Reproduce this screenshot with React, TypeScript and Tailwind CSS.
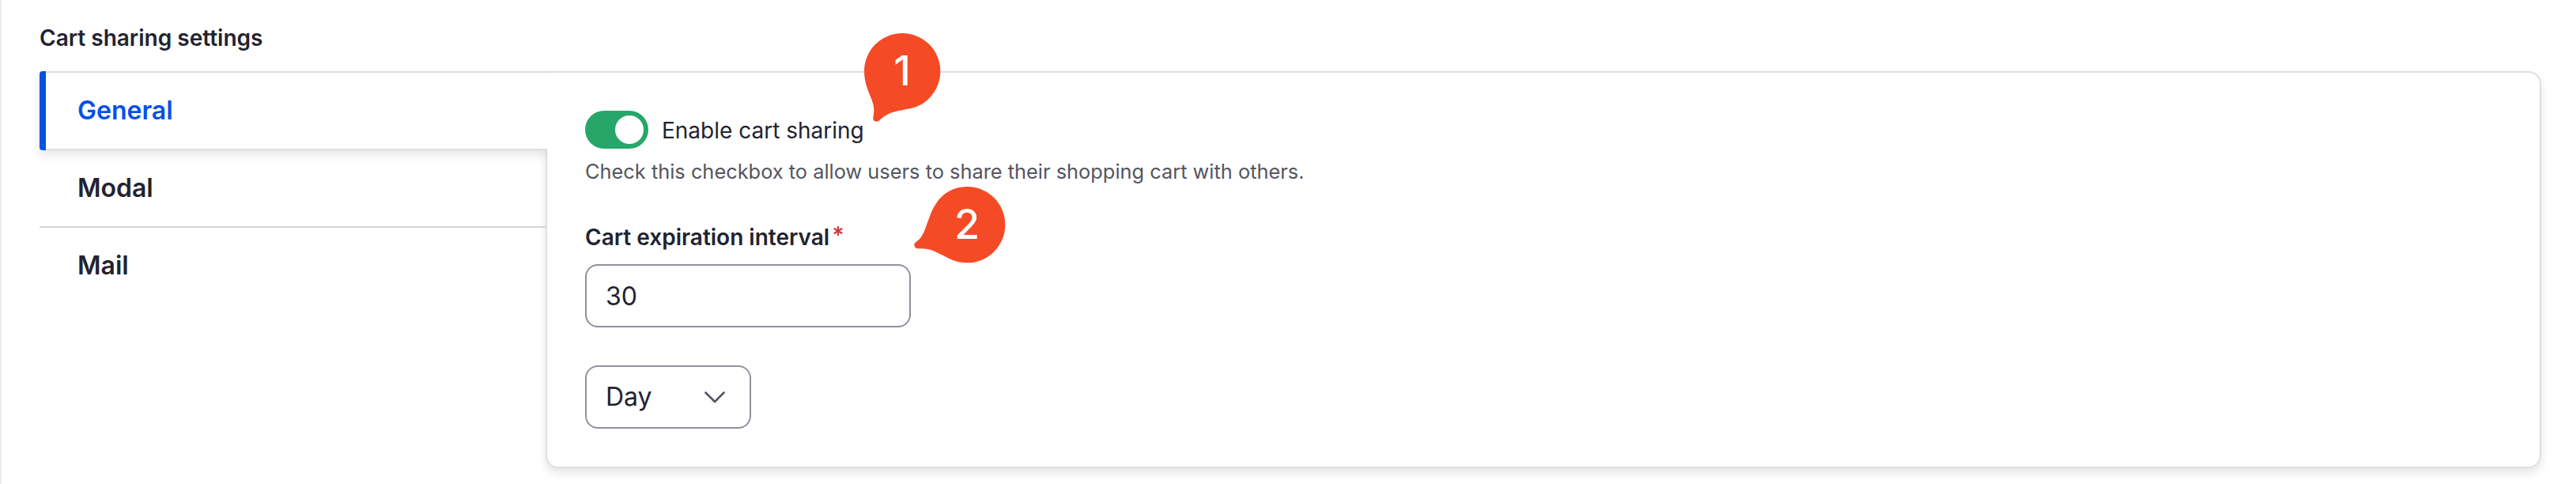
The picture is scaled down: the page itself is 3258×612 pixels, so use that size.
import { useState } from "react";

const tabs = ["General", "Modal", "Mail"];

function Tabs({ active, onSelect }: { active: string; onSelect: (tab: string) => void }) {
  return (
    <ul className="relative z-10 -mr-[2px] w-[642px] shrink-0">
      {tabs.map((tab) =>
        tab === active ? (
          <li
            key={tab}
            className="relative flex h-[100px] items-center overflow-visible rounded-l-[4px] border-y-2 border-[#dedfe4] bg-white pl-[48px] shadow-[0_6px_12px_rgba(0,0,0,0.1)] [clip-path:inset(0_0_-30px_-20px)]"
          >
            <span className="absolute -inset-y-[2px] left-0 w-2 rounded-l-[4px] bg-[#0550e6]" />
            <button className="text-[32px] leading-10 font-semibold text-[#0550e6]">{tab}</button>
          </li>
        ) : (
          <li
            key={tab}
            className="mr-[2px] flex h-[98px] items-center border-b-2 border-[#d4d4d8] pl-[48px] last:border-transparent"
          >
            <button
              onClick={() => onSelect(tab)}
              className="text-[32px] leading-10 font-semibold text-[#222330]"
            >
              {tab}
            </button>
          </li>
        ),
      )}
    </ul>
  );
}

function Marker({ label, className, viewBox, path, labelClass }: {
  label: string;
  className: string;
  viewBox: string;
  path: string;
  labelClass: string;
}) {
  return (
    <div className={className}>
      <svg viewBox={viewBox} className="absolute inset-0 size-full" fill="#f54a26">
        <path d={path} />
      </svg>
      <span className={labelClass}>{label}</span>
    </div>
  );
}

export default function App() {
  const [active, setActive] = useState("General");
  return (
    <main className="relative h-[612px] w-[3258px] overflow-hidden border-l-2 border-[#ebebeb] bg-white pt-[28px] pl-[48px] font-['Inter',sans-serif] text-[#222330]">
      <h2 className="h-[62px] text-[28px] leading-[40px] font-semibold">Cart sharing settings</h2>
      <div className="flex h-[502px] w-[3164px] rounded-2xl">
        <Tabs active={active} onSelect={setActive} />
        <section className="flex h-[502px] w-[2524px] flex-col items-start rounded-2xl rounded-tl-none border-2 border-[#dedfe4] bg-white pt-[48px] pl-[48px] shadow-[0_6px_12px_rgba(0,0,0,0.1)]">
          <label className="flex h-12 items-center gap-[17px]">
            <span className="flex h-12 w-20 items-center justify-end rounded-full bg-[#26a769] pr-[6px]">
              <span className="size-9 rounded-full bg-white" />
            </span>
            <span className="pt-[2px] text-[28px] leading-10">Enable cart sharing</span>
          </label>
          <p className="mt-[11px] text-[25.38px] leading-9 text-[#545560]">
            Check this checkbox to allow users to share their shopping cart with others.
          </p>
          <label className="mt-[45px] flex h-10 items-start text-[28px] leading-10 font-semibold">
            Cart expiration interval
            <svg viewBox="0 0 12 12" className="mt-[6px] ml-[5px] size-3" stroke="#cc3d3d" strokeWidth="2.2">
              <path d="M6 0V12M.7 2.8 11.3 9.2M11.3 2.8.7 9.2" />
            </svg>
          </label>
          <input
            defaultValue="30"
            className="mt-[14px] h-20 w-[412px] rounded-2xl border-2 border-[#8e929c] px-6 text-[32px] leading-10"
          />
          <button className="mt-12 flex h-20 w-[210px] items-center justify-between rounded-2xl border-2 border-[#8e929c] pr-[31px] pl-6 text-[32px] leading-10">
            Day
            <svg viewBox="0 0 26 15" className="h-[15px] w-[26px]" fill="none" stroke="#545560" strokeWidth="2.6" strokeLinecap="round" strokeLinejoin="round">
              <path d="M1.5 1.5 13 13 24.5 1.5" />
            </svg>
          </button>
        </section>
      </div>
      <Marker
        label="1"
        className="absolute top-[40px] left-[1089px] z-20 h-[116px] w-[100px]"
        viewBox="93 60 300 348"
        path="M99 210A144.5 144 0 0 1 388 210C388 275 345 330 290 347C245 360 195 358 160 394C150 406 131 403 133 385C139 355 136 340 125 312C113 283 99 250 99 210Z"
        labelClass="absolute top-[20px] left-0 w-[100px] text-center text-[52px] leading-[60px] font-medium text-white"
      />
      <Marker
        label="2"
        className="absolute top-[234px] left-[1153px] z-20 h-[100px] w-[120px]"
        viewBox="285 642 360 300"
        path="M490 648A144 144.5 0 0 1 490 937C450 937 420 922 400 910C365 892 345 880 304 883C287 883 284 864 296 858C325 840 332 800 346 766C365 705 410 648 490 648Z"
        labelClass="absolute top-[20px] left-[18px] w-[100px] text-center text-[52px] leading-[60px] font-medium text-white"
      />
    </main>
  );
}
